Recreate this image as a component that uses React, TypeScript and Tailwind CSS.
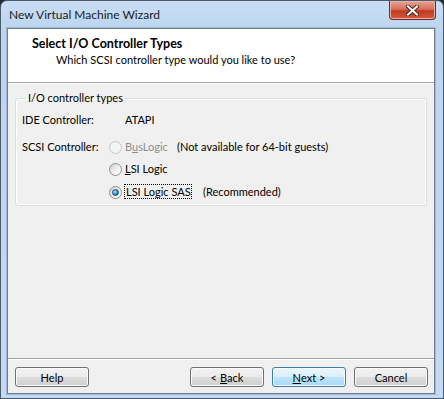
import type { ReactNode } from 'react';

function Radio({ checked, disabled }: { checked?: boolean; disabled?: boolean }) {
  return (
    <span
      className={`flex h-[13px] w-[13px] shrink-0 items-center justify-center rounded-full border ${
        disabled
          ? 'border-[#c8c8c8] bg-[#f4f4f4]'
          : 'border-[#8e8f8f] bg-[linear-gradient(135deg,#cfcfcf,#f2f2f2_60%,#ffffff)]'
      }`}
    >
      {checked && (
        <span className="h-[7px] w-[7px] rounded-full border border-[#1a4d77] bg-[radial-gradient(circle_at_35%_35%,#a9e4ff,#2b8fd0_55%,#0c4b80)]" />
      )}
    </span>
  );
}

function Button({ children, primary }: { children: ReactNode; primary?: boolean }) {
  return (
    <button
      className={`flex h-[20px] w-[74px] items-center justify-center rounded-[3px] border text-[11px] leading-none whitespace-nowrap text-black ${
        primary
          ? 'border-[#3c7fb1] bg-[linear-gradient(#eaf6fd,#d9f0fc_50%,#bee6fd_50%,#a7d9f5)] shadow-[inset_0_0_0_1px_#f4fbff]'
          : 'border-[#707070] bg-[linear-gradient(#f2f2f2,#ebebeb_50%,#dddddd_50%,#cfcfcf)] shadow-[inset_0_0_0_1px_#fcfcfc]'
      }`}
    >
      {children}
    </button>
  );
}

export default function App() {
  return (
    <div className="h-[399px] w-[444px] overflow-hidden bg-[#1f2a36] font-['Lato',sans-serif] text-[11px] leading-[16px] whitespace-nowrap text-black">
      <div className="flex h-full flex-col rounded-t-[7px] border border-[#4c5b6c] bg-[linear-gradient(#c9def5,#bcd4ef_30px,#c4daf3)]">
        {/* title bar */}
        <div className="flex h-[27px] shrink-0 items-start justify-between">
          <span className="mt-[6px] ml-[8px] text-[12px] text-[#1b1b1b]">New Virtual Machine Wizard</span>
          <div className="mr-[7px] flex h-[19px] w-[47px] items-center justify-center rounded-b-[4px] border border-t-0 border-[#6d2a24] bg-[linear-gradient(#e8a494,#d7705d_45%,#c03a22_55%,#d5593c)] shadow-[inset_0_0_0_1px_#eab3a5]">
            <svg width="13" height="11" viewBox="0 0 13 11">
              <path d="M2 1.5 L11 9.5 M11 1.5 L2 9.5" stroke="#4a2420" strokeWidth="4" strokeLinecap="square" />
              <path d="M2 1.5 L11 9.5 M11 1.5 L2 9.5" stroke="#ffffff" strokeWidth="2" strokeLinecap="square" />
            </svg>
          </div>
        </div>

        <div className="flex flex-1 px-[6px] pb-[4px]">
          <div className="flex h-[366px] w-[428px] flex-col border border-[#6f7e8f] bg-[#f0f0f0] shadow-[0_0_0_1px_#9fb9d6]">
            {/* header */}
            <div className="h-[53px] shrink-0 bg-white pt-[7px]">
              <div className="pl-[24px] text-[12.5px] font-bold">Select I/O Controller Types</div>
              <div className="pl-[48px]">Which SCSI controller type would you like to use?</div>
            </div>
            <div className="h-[2px] shrink-0 border-t border-b border-t-[#a0a0a0] border-b-white" />

            {/* body */}
            <div className="flex-1 px-[7px] pt-[6px]">
              <fieldset className="rounded-[3px] border border-[#d5dfe5] px-[6px] pb-[5px] shadow-[inset_0_0_0_1px_#ffffff]">
                <legend className="ml-[4px] px-[2px]">I/O controller types</legend>
                <div className="mt-[6px] flex h-[16px] items-center">
                  <span className="w-[103px]">IDE Controller:</span>
                  <span>ATAPI</span>
                </div>
                <div className="mt-[11px] flex h-[16px] items-center">
                  <span className="w-[87px]">SCSI Controller:</span>
                  <Radio disabled />
                  <span className="ml-[3px] w-[52px] text-[#8d8d8d]">
                    B<span className="underline">u</span>sLogic
                  </span>
                  <span>(Not available for 64-bit guests)</span>
                </div>
                <div className="mt-[6px] flex h-[16px] items-center pl-[87px]">
                  <Radio />
                  <span className="ml-[3px]">
                    <span className="underline">L</span>SI Logic
                  </span>
                </div>
                <div className="mt-[7px] flex h-[16px] items-center pl-[87px]">
                  <Radio checked />
                  <span className="ml-[2px] w-[79px]">
                    <span className="inline-block w-[68px] border border-dotted border-black pl-[1px] leading-[13px]">
                      LSI Logic SAS
                    </span>
                  </span>
                  <span>(Recommended)</span>
                </div>
              </fieldset>
            </div>

            <div className="h-[2px] shrink-0 border-t border-b border-t-[#a0a0a0] border-b-white" />
            {/* footer */}
            <div className="flex h-[33px] shrink-0 items-start justify-between pt-[7px] pr-[6px] pl-[7px]">
              <Button>Help</Button>
              <div className="flex gap-[8px]">
                <Button>
                  &lt; <span className="ml-[3px] underline">B</span>ack
                </Button>
                <Button primary>
                  <span className="underline">N</span>ext &gt;
                </Button>
                <Button>Cancel</Button>
              </div>
            </div>
          </div>
        </div>
      </div>
    </div>
  );
}
